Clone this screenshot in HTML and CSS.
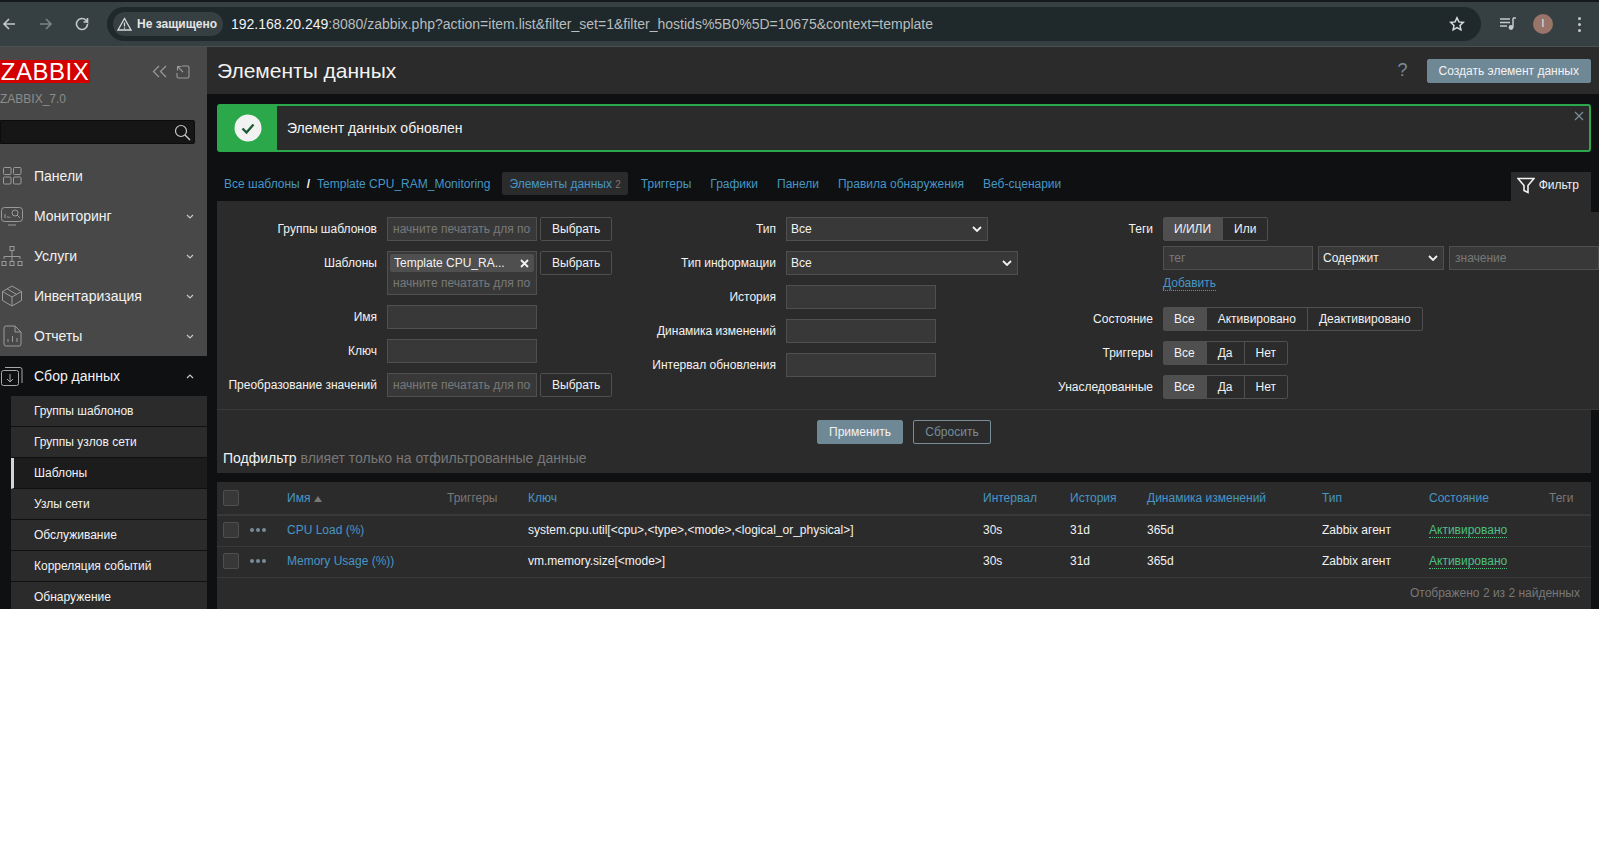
FILE: index.html
```html
<!DOCTYPE HTML>
<html>
<head>
<meta charset="utf-8">
<title>Элементы данных</title>
<link rel="stylesheet" href="styles.css">
</head>

<body>
<div class="toolbar">
	<svg class="nav-icon" width="16" height="16" viewBox="0 0 16 16"><path d="M14 8H3M8 3L3 8l5 5" fill="none" stroke="#c4c9ca" stroke-width="1.6"/></svg>
	<svg class="nav-icon dim" width="16" height="16" viewBox="0 0 16 16"><path d="M2 8h11M8 3l5 5-5 5" fill="none" stroke="#7b8588" stroke-width="1.6"/></svg>
	<svg class="nav-icon" width="16" height="16" viewBox="0 0 16 16"><path d="M12.500 8a5.500 5.500 0 1 1-1.600-3.900L12.500 6V2M12.500 6H8.500" fill="none" stroke="#c4c9ca" stroke-width="1.6"/></svg>
	<div class="address">
		<div class="chip">
			<svg width="15" height="14" viewBox="0 0 15 14"><path d="M7.5 1.5L14 13H1zM7.5 5.5v4M7.5 10.5v1.2" fill="none" stroke="#d6dadb" stroke-width="1.3"/></svg>
			<span>Не защищено</span>
		</div>
		<div class="url"><b>192.168.20.249</b>:8080/zabbix.php?action=item.list&amp;filter_set=1&amp;filter_hostids%5B0%5D=10675&amp;context=template</div>
		<svg class="star" width="16" height="16" viewBox="0 0 16 16"><path d="M8 1.8l1.9 4.1 4.4.5-3.3 3 .9 4.4L8 11.6l-3.9 2.2.9-4.4-3.3-3 4.4-.5z" fill="none" stroke="#d6dadb" stroke-width="1.5"/></svg>
	</div>
	<svg class="media" width="16" height="14" viewBox="0 0 16 14"><path d="M0 2h10M0 5.5h10M0 9h7" stroke="#c4c9ca" stroke-width="1.5"/><path d="M13 1v9" stroke="#c4c9ca" stroke-width="1.5"/><path d="M13 1h3" stroke="#c4c9ca" stroke-width="1.5"/><circle cx="11" cy="10.5" r="2.4" fill="#c4c9ca"/></svg>
	<div class="avatar">I</div>
	<div class="kebab"><i></i><i></i><i></i></div>
</div>

<div class="app">
	<aside class="sidebar">
		<div class="brand">
			<div class="logo">ZABBIX</div>
			<div class="brand-tools">
				<svg width="17" height="13" viewBox="0 0 17 13"><path d="M9 1L3.500 6.500 9 12M16 1l-5.500 5.500L16 12" fill="none" stroke="#9a9a9a" stroke-width="1.2"/></svg>
				<svg width="14" height="14" viewBox="0 0 14 14"><path d="M6 1h5.500A1.500 1.500 0 0 1 13 2.500v9a1.500 1.500 0 0 1-1.500 1.500h-9A1.500 1.500 0 0 1 1 11.500V8M7 7L1.500 1.500M1.500 5.500v-4h4" fill="none" stroke="#9a9a9a" stroke-width="1.1"/></svg>
			</div>
		</div>
		<div class="version">ZABBIX_7.0</div>
		<div class="search">
			<svg width="17" height="17" viewBox="0 0 17 17"><circle cx="7" cy="7" r="5.5" fill="none" stroke="#c8c8c8" stroke-width="1.2"/><path d="M11 11l5 5" stroke="#c8c8c8" stroke-width="1.4"/></svg>
		</div>
		<ul class="menu">
			<li class="menu-item">
				<svg class="menu-icon" width="22" height="22" viewBox="0 0 22 22"><g fill="none" stroke="#9a9a9a"><rect x="2.500" y="2.500" width="7.500" height="7" rx="1"/><rect x="12.500" y="2.500" width="7.500" height="7" rx="1"/><rect x="2.500" y="12" width="7.500" height="7" rx="1"/><rect x="12.500" y="12" width="7.500" height="7" rx="1"/></g></svg>
				<span>Панели</span>
			</li>
			<li class="menu-item">
				<svg class="menu-icon" width="24" height="22" viewBox="0 0 24 22"><g fill="none" stroke="#9a9a9a"><rect x="1.500" y="2.500" width="21" height="14" rx="3"/><path d="M8 20h8M5 13V9M8 13v-2M10 13v-1"/><circle cx="15" cy="8" r="3"/><path d="M17 10l3 3"/></g></svg>
				<span>Мониторинг</span>
				<svg class="chevron" width="8" height="5" viewBox="0 0 8 5"><path d="M1 1l3 3 3-3" fill="none" stroke="#c8c8c8" stroke-width="1.2"/></svg>
			</li>
			<li class="menu-item">
				<svg class="menu-icon" width="24" height="24" viewBox="0 0 24 24"><g fill="none" stroke="#9a9a9a"><rect x="10" y="2.500" width="4" height="4"/><rect x="2" y="17.500" width="4" height="4"/><rect x="10" y="17.500" width="4" height="4"/><rect x="18" y="17.500" width="4" height="4"/><path d="M12 7v10M4 15v-2.500h16V15"/></g></svg>
				<span>Услуги</span>
				<svg class="chevron" width="8" height="5" viewBox="0 0 8 5"><path d="M1 1l3 3 3-3" fill="none" stroke="#c8c8c8" stroke-width="1.2"/></svg>
			</li>
			<li class="menu-item">
				<svg class="menu-icon" width="24" height="24" viewBox="0 0 24 24"><g fill="none" stroke="#9a9a9a"><path d="M12 2l9.500 5.500v9L12 22l-9.500-5.500v-9zM2.500 7.500L12 13l9.500-5.500M12 13v9M7 4.800l9.500 5.500"/></g></svg>
				<span>Инвентаризация</span>
				<svg class="chevron" width="8" height="5" viewBox="0 0 8 5"><path d="M1 1l3 3 3-3" fill="none" stroke="#c8c8c8" stroke-width="1.2"/></svg>
			</li>
			<li class="menu-item">
				<svg class="menu-icon" width="24" height="24" viewBox="0 0 24 24"><g fill="none" stroke="#9a9a9a"><path d="M6 2h9l6 6v12a2 2 0 0 1-2 2H6a2 2 0 0 1-2-2V4a2 2 0 0 1 2-2zM15 2v6h6M8 18v-3M12.500 18v-6M17 18v-4"/></g></svg>
				<span>Отчеты</span>
				<svg class="chevron" width="8" height="5" viewBox="0 0 8 5"><path d="M1 1l3 3 3-3" fill="none" stroke="#c8c8c8" stroke-width="1.2"/></svg>
			</li>
			<li class="menu-item open">
				<svg class="menu-icon" width="24" height="24" viewBox="0 0 24 24"><g fill="none" stroke="#a8a8a8"><rect x="1.500" y="6.500" width="17" height="15" rx="2"/><path d="M5 3.500h15a2 2 0 0 1 2 2V19M10 10v8M7 15l3 3 3-3"/></g></svg>
				<span>Сбор данных</span>
				<svg class="chevron" width="8" height="5" viewBox="0 0 8 5"><path d="M1 4l3-3 3 3" fill="none" stroke="#c8c8c8" stroke-width="1.2"/></svg>
			</li>
		</ul>
		<ul class="submenu">
			<li>Группы шаблонов</li>
			<li>Группы узлов сети</li>
			<li class="selected">Шаблоны</li>
			<li>Узлы сети</li>
			<li>Обслуживание</li>
			<li>Корреляция событий</li>
			<li>Обнаружение</li>
		</ul>
	</aside>

	<main class="main">
		<header class="page-head">
			<h1>Элементы данных</h1>
			<span class="help">?</span>
			<button class="btn-primary">Создать элемент данных</button>
		</header>

		<div class="message">
			<div class="message-icon">
				<svg width="28" height="28" viewBox="0 0 28 28"><circle cx="14" cy="14" r="13.500" fill="#f2f2f2"/><path d="M8.500 14.500l4 4 7-8" fill="none" stroke="#1d5c36" stroke-width="2.400"/></svg>
			</div>
			<div class="message-text">Элемент данных обновлен</div>
			<svg class="message-close" width="10" height="10" viewBox="0 0 10 10"><path d="M1 1l8 8M9 1l-8 8" stroke="#768d99" stroke-width="1.300"/></svg>
		</div>

		<nav class="tabs">
			<a class="crumb">Все шаблоны</a>
			<span class="slash">/</span>
			<a class="crumb">Template CPU_RAM_Monitoring</a>
			<a class="tab active">Элементы данных <sup>2</sup></a>
			<a class="tab">Триггеры</a>
			<a class="tab">Графики</a>
			<a class="tab">Панели</a>
			<a class="tab">Правила обнаружения</a>
			<a class="tab">Веб-сценарии</a>
			<div class="filter-tab">
				<svg width="18" height="17" viewBox="0 0 18 17"><path d="M1 1.500h16l-6 7v7l-4-2v-5z" fill="none" stroke="#f2f2f2" stroke-width="1.600"/></svg>
				<span>Фильтр</span>
			</div>
		</nav>

		<section class="filter">
			<div class="filter-form">
				<div class="filter-col col-1">
					<div class="row"><label>Группы шаблонов</label><input class="field" placeholder="начните печатать для поиска"><button class="btn">Выбрать</button></div>
					<div class="row">
						<label>Шаблоны</label>
						<div class="multi">
							<div class="multi-chip"><span>Template CPU_RA...</span><svg width="9" height="9" viewBox="0 0 9 9"><path d="M1 1l7 7M8 1L1 8" stroke="#f2f2f2" stroke-width="1.800"/></svg></div>
							<div class="multi-hint">начните печатать для поиска</div>
						</div>
						<button class="btn">Выбрать</button>
					</div>
					<div class="row"><label>Имя</label><input class="field"></div>
					<div class="row"><label>Ключ</label><input class="field"></div>
					<div class="row"><label>Преобразование значений</label><input class="field" placeholder="начните печатать для поиска"><button class="btn">Выбрать</button></div>
				</div>

				<div class="filter-col col-2">
					<div class="row"><label>Тип</label><div class="select w-202"><span>Все</span><svg width="10" height="6" viewBox="0 0 10 6"><path d="M1 1l4 4 4-4" fill="none" stroke="#f2f2f2" stroke-width="1.800"/></svg></div></div>
					<div class="row"><label>Тип информации</label><div class="select w-232"><span>Все</span><svg width="10" height="6" viewBox="0 0 10 6"><path d="M1 1l4 4 4-4" fill="none" stroke="#f2f2f2" stroke-width="1.800"/></svg></div></div>
					<div class="row"><label>История</label><input class="field"></div>
					<div class="row"><label>Динамика изменений</label><input class="field"></div>
					<div class="row"><label>Интервал обновления</label><input class="field"></div>
				</div>

				<div class="filter-col col-3">
					<div class="row">
						<label>Теги</label>
						<div class="toggle"><span class="on">И/ИЛИ</span><span>Или</span></div>
					</div>
					<div class="tag-block">
						<div class="tag-row">
							<input class="field" placeholder="тег">
							<div class="select w-126"><span>Содержит</span><svg width="10" height="6" viewBox="0 0 10 6"><path d="M1 1l4 4 4-4" fill="none" stroke="#f2f2f2" stroke-width="1.800"/></svg></div>
							<input class="field grow" placeholder="значение">
						</div>
						<a class="add-link">Добавить</a>
					</div>
					<div class="row">
						<label>Состояние</label>
						<div class="toggle"><span class="on">Все</span><span>Активировано</span><span>Деактивировано</span></div>
					</div>
					<div class="row">
						<label>Триггеры</label>
						<div class="toggle"><span class="on">Все</span><span>Да</span><span>Нет</span></div>
					</div>
					<div class="row">
						<label>Унаследованные</label>
						<div class="toggle"><span class="on">Все</span><span>Да</span><span>Нет</span></div>
					</div>
				</div>
			</div>
			<div class="filter-actions">
				<button class="btn-primary">Применить</button>
				<button class="btn-outline">Сбросить</button>
			</div>
			<div class="subfilter"><b>Подфильтр</b> влияет только на отфильтрованные данные</div>
		</section>

		<section class="list">
			<table>
				<colgroup>
					<col class="c-check"><col class="c-dots"><col class="c-name"><col class="c-trig"><col class="c-key"><col class="c-int"><col class="c-hist"><col class="c-dyn"><col class="c-type"><col class="c-state"><col>
				</colgroup>
				<thead>
					<tr>
						<th><span class="check"></span></th>
						<th></th>
						<th><a>Имя</a> <i class="sort"></i></th>
						<th class="muted">Триггеры</th>
						<th><a>Ключ</a></th>
						<th><a>Интервал</a></th>
						<th><a>История</a></th>
						<th><a>Динамика изменений</a></th>
						<th><a>Тип</a></th>
						<th><a>Состояние</a></th>
						<th class="muted">Теги</th>
					</tr>
				</thead>
				<tbody>
					<tr>
						<td><span class="check"></span></td>
						<td><span class="dots"><i></i><i></i><i></i></span></td>
						<td><a>CPU Load (%)</a></td>
						<td></td>
						<td>system.cpu.util[&lt;cpu&gt;,&lt;type&gt;,&lt;mode&gt;,&lt;logical_or_physical&gt;]</td>
						<td>30s</td>
						<td>31d</td>
						<td>365d</td>
						<td>Zabbix агент</td>
						<td><a class="enabled">Активировано</a></td>
						<td></td>
					</tr>
					<tr>
						<td><span class="check"></span></td>
						<td><span class="dots"><i></i><i></i><i></i></span></td>
						<td><a>Memory Usage (%))</a></td>
						<td></td>
						<td>vm.memory.size[&lt;mode&gt;]</td>
						<td>30s</td>
						<td>31d</td>
						<td>365d</td>
						<td>Zabbix агент</td>
						<td><a class="enabled">Активировано</a></td>
						<td></td>
					</tr>
				</tbody>
			</table>
			<div class="list-foot">Отображено 2 из 2 найденных</div>
		</section>
	</main>
</div>
</body>
</html>
```

FILE: styles.css
```css
* {
	box-sizing: border-box;
}

body {
	margin: 0;
	background: #fff;
	font-family: "Liberation Sans", Arial, sans-serif;
	font-size: 12px;
	color: #f2f2f2;
}

ul {
	margin: 0;
	padding: 0;
	list-style: none;
}

/* browser bar */
.toolbar {
	display: flex;
	align-items: center;
	height: 47px;
	border-top: 2px solid #14191b;
	border-bottom: 1px solid #4a5154;
	background: #363f42;
}

.nav-icon {
	flex: none;
	margin-left: 1px;
	margin-right: 20px;
}

.address {
	display: flex;
	align-items: center;
	flex: none;
	width: 1374px;
	height: 34px;
	margin-left: -4px;
	padding: 0 16px 0 6px;
	border-radius: 17px;
	background: #1f282b;
}

.chip {
	display: flex;
	align-items: center;
	gap: 5px;
	flex: none;
	width: 110px;
	height: 24px;
	padding-left: 4px;
	border-radius: 12px;
	background: #363f42;
	font-weight: bold;
	color: #e3e6e6;
}

.url {
	flex: 1;
	margin-left: 8px;
	font-size: 14px;
	color: #b8bdbe;
	white-space: nowrap;
}

.url b {
	font-weight: normal;
	color: #f1f3f3;
}

.media {
	flex: none;
	margin-left: 19px;
}

.avatar {
	flex: none;
	width: 20px;
	height: 20px;
	margin-left: 17px;
	border-radius: 50%;
	background: #9a7468;
	font-size: 10px;
	line-height: 20px;
	text-align: center;
	color: #eee;
}

.kebab {
	display: flex;
	flex-direction: column;
	gap: 3px;
	margin-left: 25px;
}

.kebab i {
	width: 3px;
	height: 3px;
	border-radius: 50%;
	background: #c4c9ca;
}

/* page */
.app {
	display: flex;
	height: 562px;
	overflow: hidden;
	background: #0e1012;
}

.sidebar {
	flex: none;
	width: 207px;
	background: #484848;
}

.brand {
	display: flex;
	justify-content: space-between;
	align-items: center;
	margin-top: 13px;
	padding-right: 17px;
}

.logo {
	width: 90px;
	height: 23px;
	background: #d40000;
	font-size: 24px;
	line-height: 23px;
	letter-spacing: 0.5px;
	text-align: center;
	color: #fff;
}

.brand-tools {
	display: flex;
	gap: 9px;
	align-items: center;
}

.version {
	margin-top: 8px;
	line-height: 16px;
	color: #8c8c8c;
}

.search {
	display: flex;
	justify-content: flex-end;
	align-items: center;
	width: 195px;
	height: 24px;
	margin-top: 13px;
	padding-right: 3px;
	border: 1px solid #0c0c0c;
	border-radius: 0 2px 2px 0;
	background: #161616;
}

.menu {
	margin-top: 12px;
}

.menu-item {
	display: flex;
	align-items: center;
	height: 40px;
	font-size: 14px;
}

.menu-item.open {
	background: #0e1012;
}

.menu-icon {
	flex: none;
	width: 24px;
	margin-right: 10px;
}

.chevron {
	margin-left: auto;
	margin-right: 13px;
}

.submenu {
	padding-left: 11px;
	background: #0e1012;
}

.submenu li {
	height: 31px;
	padding-left: 23px;
	border-bottom: 1px solid #0e1012;
	background: #2b2b2b;
	line-height: 30px;
}

.submenu .selected {
	padding-left: 20px;
	border-left: 3px solid #d4d4d4;
	background: #1c1c1c;
}

.main {
	flex: 1;
	min-width: 0;
	overflow: hidden;
}

.page-head {
	display: flex;
	align-items: center;
	height: 47px;
	padding: 0 8px 0 10px;
	background: #2b2b2b;
}

h1 {
	flex: 1;
	margin: 0;
	font-size: 21px;
	font-weight: normal;
}

.help {
	margin-right: 19px;
	font-size: 18px;
	color: #768d99;
}

button {
	font-family: inherit;
	font-size: 12px;
	height: 24px;
	border-radius: 2px;
	padding: 0 11px;
}

.btn-primary {
	border: 1px solid #6f8896;
	background: #6f8896;
	color: #f2f2f2;
}

.btn-outline {
	border: 1px solid #768d99;
	background: transparent;
	color: #768d99;
}

.btn {
	flex: none;
	width: 72px;
	border: 1px solid #4f4f4f;
	background: #2b2b2b;
	color: #f2f2f2;
}

.message {
	position: relative;
	display: flex;
	align-items: center;
	height: 48px;
	margin: 10px 8px 0 10px;
	border: 2px solid #2ba84a;
	border-radius: 3px;
	background: #2b2b2b;
}

.message-icon {
	display: flex;
	justify-content: center;
	align-items: center;
	align-self: stretch;
	width: 58px;
	background: #2ba84a;
}

.message-text {
	margin-left: 10px;
	font-size: 14px;
}

.message-close {
	position: absolute;
	top: 5px;
	right: 5px;
}

.tabs {
	display: flex;
	align-items: flex-start;
	height: 29px;
	margin: 20px 8px 0 10px;
	padding-left: 7px;
}

.crumb, .slash, .tab {
	line-height: 24px;
	color: #4796c4;
}

.slash {
	margin: 0 7px;
	font-weight: bold;
	color: #f2f2f2;
}

.tab {
	margin-left: 19px;
}

.tab.active {
	height: 23px;
	margin-left: 12px;
	margin-right: -6px;
	padding: 0 7px;
	background: #2b2b2b;
	border-radius: 2px;
}

.tab.active sup {
	font-size: 10px;
	color: #787878;
	vertical-align: baseline;
}

.filter-tab {
	display: flex;
	align-items: center;
	gap: 4px;
	height: 40px;
	margin-left: auto;
	padding: 0 12px 14px 6px;
	background: #2b2b2b;
	color: #f2f2f2;
}

.filter {
	height: 272px;
	margin: 0 8px 0 10px;
	padding-top: 11px;
	background: #2b2b2b;
}

.filter-form {
	display: flex;
	height: 198px;
	margin-right: -8px;
	padding-top: 5px;
	border-bottom: 1px solid #383838;
	background: #2b2b2b;
}

.filter-col {
	display: flex;
	flex-direction: column;
	gap: 10px;
}

.col-1 {
	flex: none;
	width: 396px;
}

.col-2 {
	flex: none;
	width: 406px;
}

.col-3 {
	flex: 1;
	min-width: 0;
}

.row {
	display: flex;
	gap: 10px;
	align-items: flex-start;
}

label {
	flex: none;
	line-height: 24px;
	text-align: right;
	white-space: nowrap;
}

.col-1 label {
	width: 160px;
}

.col-2 label {
	width: 163px;
}

.col-3 label {
	width: 134px;
}

.field {
	flex: none;
	width: 150px;
	height: 24px;
	padding: 0 5px;
	border: 1px solid #4f4f4f;
	background: #383838;
	font-family: inherit;
	font-size: 12px;
	color: #f2f2f2;
}

.col-1 .row .field + .btn, .multi + .btn {
	margin-left: -7px;
}

.field::placeholder {
	color: #787878;
	opacity: 1;
}

.multi {
	flex: none;
	width: 150px;
	height: 44px;
	padding: 2px;
	border: 1px solid #4f4f4f;
	background: #383838;
	overflow: hidden;
}

.multi-chip {
	display: flex;
	justify-content: space-between;
	align-items: center;
	height: 18px;
	padding: 0 5px 0 4px;
	border-radius: 2px;
	background: #4f4f4f;
}

.multi-hint {
	margin-right: 3px;
	padding-left: 3px;
	line-height: 22px;
	color: #787878;
	white-space: nowrap;
	overflow: hidden;
}

.select {
	display: flex;
	justify-content: space-between;
	align-items: center;
	flex: none;
	height: 24px;
	padding: 0 5px 0 4px;
	border: 1px solid #4f4f4f;
	background: #383838;
}

.w-202 {
	width: 202px;
}

.w-232 {
	width: 232px;
}

.w-126 {
	width: 126px;
}

.toggle {
	display: flex;
	height: 24px;
	border: 1px solid #4f4f4f;
	border-radius: 2px;
}

.toggle span {
	padding: 0 11px;
	border-left: 1px solid #4f4f4f;
	line-height: 22px;
}

.toggle span:first-child {
	padding-left: 10px;
	border-left: 0;
}

.toggle .on {
	background: #4f4f4f;
}

.tag-block {
	margin: -5px 0 6px 144px;
}

.tag-row {
	display: flex;
	gap: 5px;
}

.grow {
	flex: 1;
	min-width: 0;
}

.add-link {
	display: inline-block;
	margin-top: 6px;
	border-bottom: 1px dotted #4796c4;
	line-height: 14px;
	color: #4796c4;
}

.filter-actions {
	display: flex;
	justify-content: center;
	gap: 10px;
	padding-top: 10px;
}

.filter-actions button {
	width: 86px;
}

.filter-actions .btn-outline {
	width: 78px;
}

.subfilter {
	margin-top: 5px;
	padding-left: 6px;
	font-size: 14px;
	line-height: 18px;
	color: #787878;
}

.subfilter b {
	font-weight: normal;
	color: #f2f2f2;
}

.list {
	height: 127px;
	margin: 9px 8px 0 10px;
	background: #2b2b2b;
}

table {
	width: 100%;
	border-collapse: collapse;
	table-layout: fixed;
}

.c-check { width: 33px; }
.c-dots { width: 37px; }
.c-name { width: 160px; }
.c-trig { width: 81px; }
.c-key { width: 455px; }
.c-int { width: 87px; }
.c-hist { width: 77px; }
.c-dyn { width: 175px; }
.c-type { width: 107px; }
.c-state { width: 120px; }

th, td {
	padding: 0;
	font-weight: normal;
	text-align: left;
	white-space: nowrap;
}

th {
	height: 33px;
	border-bottom: 2px solid #383838;
}

td {
	height: 31px;
	padding-bottom: 2px;
	border-bottom: 1px solid #383838;
}

th:first-child, td:first-child {
	padding-left: 6px;
}

a {
	color: #4796c4;
}

.muted {
	color: #787878;
}

.check {
	display: block;
	width: 16px;
	height: 16px;
	border: 1px solid #4f4f4f;
	border-radius: 2px;
	background: #383838;
}

.sort {
	display: inline-block;
	border-left: 4px solid transparent;
	border-right: 4px solid transparent;
	border-bottom: 6px solid #787878;
}

.dots {
	display: flex;
	gap: 2px;
}

.dots i {
	width: 4px;
	height: 4px;
	border-radius: 50%;
	background: #768d99;
}

.enabled {
	border-bottom: 1px dotted #4cc080;
	color: #4cc080;
}

.list-foot {
	padding: 8px 11px 0 0;
	text-align: right;
	color: #787878;
}
```
